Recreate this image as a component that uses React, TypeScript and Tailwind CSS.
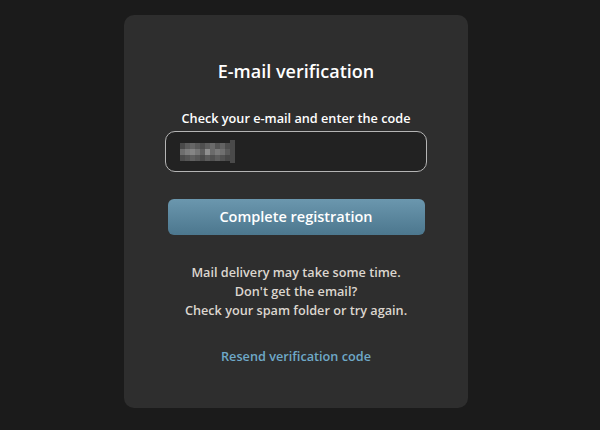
const pixelRows = [
  ['bg-[#4a4a4a]', 'bg-[#5c5c5c]', 'bg-[#666666]', 'bg-[#5a5a5a]', 'bg-[#4f4f4f]', 'bg-[#5e5e5e]', 'bg-[#6a6a6a]', 'bg-[#555555]', 'bg-[#626262]', 'bg-[#4d4d4d]'],
  ['bg-[#6e6e6e]', 'bg-[#7d7d7d]', 'bg-[#858585]', 'bg-[#767676]', 'bg-[#5f5f5f]', 'bg-[#8f8f8f]', 'bg-[#6b6b6b]', 'bg-[#7a7a7a]', 'bg-[#707070]', 'bg-[#5a5a5a]'],
  ['bg-[#4c4c4c]', 'bg-[#555555]', 'bg-[#606060]', 'bg-[#575757]', 'bg-[#4b4b4b]', 'bg-[#5b5b5b]', 'bg-[#515151]', 'bg-[#5d5d5d]', 'bg-[#525252]', 'bg-[#474747]'],
]

export default function App() {
  return (
    <div className="h-[430px] w-[600px] bg-[#1b1b1b] pt-[15px] font-['Open_Sans',sans-serif]">
      <div className="ml-[124px] flex h-[393px] w-[344px] flex-col items-center rounded-[10px] bg-[#2e2e2e]">
        <h1 className="mt-[43px] text-[18px] leading-[26px] font-semibold text-white">E-mail verification</h1>

        <label className="mt-[25px] text-[12.7px] leading-[18px] font-semibold text-white">
          Check your e-mail and enter the code
        </label>

        <div className="mt-[4px] flex h-[41px] w-[262px] items-center rounded-[10px] border border-[#b5b5b5] bg-[#222222] pl-[14px]">
          <div className="flex flex-col">
            {pixelRows.map((row, i) => (
              <div key={i} className="flex">
                {row.map((c, j) => (
                  <div key={j} className={`h-[6px] w-[5px] ${c}`} />
                ))}
              </div>
            ))}
          </div>
          <div className="h-[23px] w-[5px] bg-[#4a4a4a]" />
        </div>

        <button className="mt-[27px] h-[36px] w-[257px] rounded-[6px] bg-gradient-to-b from-[#6b97ae] to-[#4c778e] text-[14.5px] font-semibold text-white">
          Complete registration
        </button>

        <p className="mt-[28px] text-center text-[12.7px] leading-[19px] font-semibold text-[#dcd6cf]">
          Mail delivery may take some time.
          <br />
          Don't get the email?
          <br />
          Check your spam folder or try again.
        </p>

        <a className="mt-[27px] text-[12.7px] leading-[18px] font-semibold text-[#6fa9c8]">Resend verification code</a>
      </div>
    </div>
  )
}
